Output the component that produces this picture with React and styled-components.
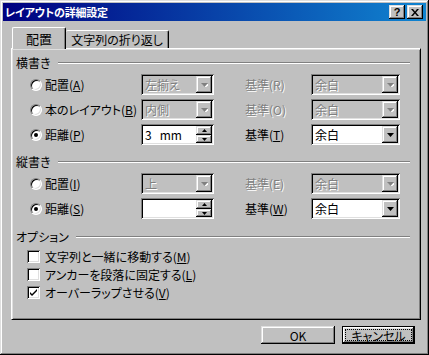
import React from 'react'
import styled, { createGlobalStyle, css } from 'styled-components'

const GlobalStyle = createGlobalStyle`
  html, body { margin: 0; padding: 0; background: #c0c0c0; }
  body {
    font-family: "Noto Sans CJK JP", "Liberation Sans", sans-serif;
    font-size: 12px;
    color: #000;
    font-feature-settings: "palt";
  }
`

const raised = css`
  box-shadow: inset -1px -1px #000, inset 1px 1px #dfdfdf, inset -2px -2px #808080, inset 2px 2px #fff;
`
const sunken = css`
  box-shadow: inset 1px 1px #808080, inset -1px -1px #fff, inset 2px 2px #000, inset -2px -2px #dfdfdf;
`

const Window = styled.div`
  width: 429px;
  height: 355px;
  box-sizing: border-box;
  padding: 3px;
  background: #c0c0c0;
  display: flex;
  flex-direction: column;
  ${raised}
`

const TitleBar = styled.div`
  height: 18px;
  display: flex;
  align-items: center;
  padding: 0 3px 0 2px;
  background: linear-gradient(to right, #000080, #1084d0);
`

const TitleText = styled.div`
  flex: 1;
  color: #fff;
  font-weight: bold;
  font-size: 11px;
  letter-spacing: -0.2px;
`

const TitleButton = styled.div`
  width: 16px;
  height: 14px;
  margin-left: 2px;
  background: #c0c0c0;
  display: flex;
  align-items: center;
  justify-content: center;
  font-family: "Liberation Sans", sans-serif;
  font-weight: bold;
  font-size: 11px;
  line-height: 1;
  ${raised}
`

const Body = styled.div`
  padding: 6px 5px 0 8px;
  display: flex;
  flex-direction: column;
`

const TabRow = styled.div`
  height: 21px;
  display: flex;
  align-items: flex-end;
  padding-left: 1px;
`

const Tab = styled.div`
  box-sizing: border-box;
  display: flex;
  align-items: center;
  justify-content: center;
  border-top: 1px solid #fff;
  border-right: 1px solid #000;
  box-shadow: inset -1px 0 #808080;
  border-radius: 2px 2px 0 0;
  background: #c0c0c0;
  ${p => p.$active ? css`
    width: 54px;
    height: 22px;
    margin-bottom: -1px;
    border-left: 1px solid #fff;
    font-size: 13px;
    position: relative;
    z-index: 1;
  ` : css`
    width: 103px;
    height: 18px;
  `}
`

const Panel = styled.div`
  width: 410px;
  height: 272px;
  box-sizing: border-box;
  border-top: 1px solid #fff;
  border-left: 1px solid #fff;
  border-right: 1px solid #000;
  border-bottom: 1px solid #000;
  box-shadow: inset 1px 1px #dfdfdf, inset -1px -1px #808080;
  padding: 1px;
  display: flex;
  flex-direction: column;
`

const GroupHeader = styled.div`
  height: 14px;
  display: flex;
  align-items: center;
  padding-left: 3px;
  margin-top: ${p => p.$top}px;
`

const Etch = styled.div`
  flex: 1;
  height: 0;
  border-top: 1px solid #808080;
  border-bottom: 1px solid #fff;
  margin: 1px 9px 0 7px;
`

const Rows = styled.div`
  display: flex;
  flex-direction: column;
  gap: 4px;
  margin-top: ${p => p.$top}px;
`

const Row = styled.div`
  height: 21px;
  display: grid;
  grid-template-columns: 111px 73px 31px 66px 89px;
  align-items: center;
  padding-left: 17px;
`

const Choice = styled.label`
  display: flex;
  align-items: center;
  gap: 3px;
  white-space: nowrap;
`

const Radio = styled.span`
  width: 12px;
  height: 12px;
  box-sizing: border-box;
  border-radius: 50%;
  background: #fff;
  border: 1px solid;
  border-color: #808080 #fff #fff #808080;
  box-shadow: inset 1px 1px #000, inset -1px -1px #dfdfdf;
  display: flex;
  align-items: center;
  justify-content: center;
  &::after {
    content: '';
    width: 4px;
    height: 4px;
    border-radius: 50%;
    background: #000;
    display: ${p => p.$checked ? 'block' : 'none'};
  }
`

const Label = styled.span`
  white-space: nowrap;
  ${p => p.$disabled && css`
    color: #808080;
    text-shadow: 1px 1px #fff;
  `}
`

const Field = styled.div`
  height: 21px;
  box-sizing: border-box;
  padding: 2px;
  display: flex;
  background: ${p => p.$disabled ? '#c0c0c0' : '#fff'};
  ${sunken}
`

const Value = styled.div`
  flex: 1;
  line-height: 17px;
  padding-left: 2px;
  white-space: pre;
  ${p => p.$disabled && css`
    color: #808080;
    text-shadow: 1px 1px #fff;
  `}
`

const ArrowButton = styled.div`
  width: 16px;
  height: 17px;
  box-sizing: border-box;
  background: #c0c0c0;
  display: flex;
  align-items: center;
  justify-content: center;
  ${raised}
`

const SpinStack = styled.div`
  width: 16px;
  display: flex;
  flex-direction: column;
`

const SpinButton = styled.div`
  height: ${p => p.$h}px;
  box-sizing: border-box;
  background: #c0c0c0;
  display: flex;
  align-items: center;
  justify-content: center;
  ${raised}
`

const Checks = styled.div`
  display: flex;
  flex-direction: column;
  margin-top: 4px;
  padding-left: 14px;
`

const CheckRow = styled.label`
  height: 18px;
  display: flex;
  align-items: center;
  gap: 5px;
`

const Box = styled.span`
  width: 13px;
  height: 13px;
  box-sizing: border-box;
  background: #fff;
  display: flex;
  align-items: center;
  justify-content: center;
  ${sunken}
`

const Footer = styled.div`
  display: flex;
  justify-content: flex-end;
  gap: 7px;
  margin-top: 6px;
  padding-right: 6px;
`

const Button = styled.div`
  width: ${p => p.$w}px;
  height: 18px;
  box-sizing: border-box;
  display: flex;
  align-items: center;
  justify-content: center;
  background: #c0c0c0;
  ${p => p.$default ? css`
    border: 1px solid #000;
    padding: 2px;
    box-shadow: inset -1px -1px #000, inset 1px 1px #fff, inset -2px -2px #808080, inset 2px 2px #dfdfdf;
  ` : raised}
`

const Focus = styled.span`
  flex: 1;
  align-self: stretch;
  border: 1px dotted #000;
  display: flex;
  align-items: center;
  justify-content: center;
`

const Arrow = ({ disabled }) => (
  <svg width="7" height="4" viewBox="0 0 7 4">
    {disabled && <path d="M1 1h7L4.5 5z" fill="#fff" />}
    <path d="M0 0h7L3.5 4z" fill={disabled ? '#808080' : '#000'} />
  </svg>
)

const Tiny = ({ up }) => (
  <svg width="5" height="3" viewBox="0 0 5 3">
    <path d={up ? 'M2.5 0L5 3H0z' : 'M0 0h5L2.5 3z'} fill="#000" />
  </svg>
)

const Combo = ({ value, disabled }) => (
  <Field $disabled={disabled}>
    <Value $disabled={disabled}>{value}</Value>
    <ArrowButton><Arrow disabled={disabled} /></ArrowButton>
  </Field>
)

const Spin = ({ value }) => (
  <Field>
    <Value>{value}</Value>
    <SpinStack>
      <SpinButton $h={9}><Tiny up /></SpinButton>
      <SpinButton $h={8}><Tiny /></SpinButton>
    </SpinStack>
  </Field>
)

const Key = ({ text, k }) => (
  <>{text}(<u>{k}</u>)</>
)

const Check = () => (
  <svg width="7" height="7" viewBox="0 0 7 7">
    <path d="M0 2l2 2 5-5v2L2 6 0 4z" transform="translate(0 1)" fill="#000" />
  </svg>
)

const horizontal = [
  { label: '配置', k: 'A', value: '左揃え', base: 'R', on: false },
  { label: '本のレイアウト', k: 'B', value: '内側', base: 'O', on: false },
  { label: '距離', k: 'P', value: '3   mm', base: 'T', on: true, spin: true },
]

const vertical = [
  { label: '配置', k: 'I', value: '上', base: 'E', on: false },
  { label: '距離', k: 'S', value: '', base: 'W', on: true, spin: true },
]

const options = [
  { label: '文字列と一緒に移動する', k: 'M', on: false },
  { label: 'アンカーを段落に固定する', k: 'L', on: false },
  { label: 'オーバーラップさせる', k: 'V', on: true },
]

const PositionRow = ({ r }) => (
  <Row>
    <Choice>
      <Radio $checked={r.on} />
      <Label><Key text={r.label} k={r.k} /></Label>
    </Choice>
    {r.spin ? <Spin value={r.value} /> : <Combo value={r.value} disabled />}
    <span />
    <Label $disabled={!r.on}>{r.on ? <Key text="基準" k={r.base} /> : `基準(${r.base})`}</Label>
    <Combo value="余白" disabled={!r.on} />
  </Row>
)

export default function App() {
  return (
    <>
      <GlobalStyle />
      <Window>
        <TitleBar>
          <TitleText>レイアウトの詳細設定</TitleText>
          <TitleButton>?</TitleButton>
          <TitleButton>
            <svg width="8" height="7" viewBox="0 0 8 7">
              <path d="M0 0h2l2 2.5L6 0h2L5 3.5 8 7H6L4 4.5 2 7H0l3-3.5z" fill="#000" />
            </svg>
          </TitleButton>
        </TitleBar>
        <Body>
          <TabRow>
            <Tab $active>配置</Tab>
            <Tab>文字列の折り返し</Tab>
          </TabRow>
          <Panel>
            <GroupHeader $top={5}>横書き<Etch /></GroupHeader>
            <Rows $top={5}>
              {horizontal.map(r => <PositionRow key={r.k} r={r} />)}
            </Rows>
            <GroupHeader $top={9}>縦書き<Etch /></GroupHeader>
            <Rows $top={5}>
              {vertical.map(r => <PositionRow key={r.k} r={r} />)}
            </Rows>
            <GroupHeader $top={10}>オプション<Etch /></GroupHeader>
            <Checks>
              {options.map(o => (
                <CheckRow key={o.k}>
                  <Box>{o.on && <Check />}</Box>
                  <Label><Key text={o.label} k={o.k} /></Label>
                </CheckRow>
              ))}
            </Checks>
          </Panel>
          <Footer>
            <Button $w={74}>OK</Button>
            <Button $w={73} $default><Focus>キャンセル</Focus></Button>
          </Footer>
        </Body>
      </Window>
    </>
  )
}
